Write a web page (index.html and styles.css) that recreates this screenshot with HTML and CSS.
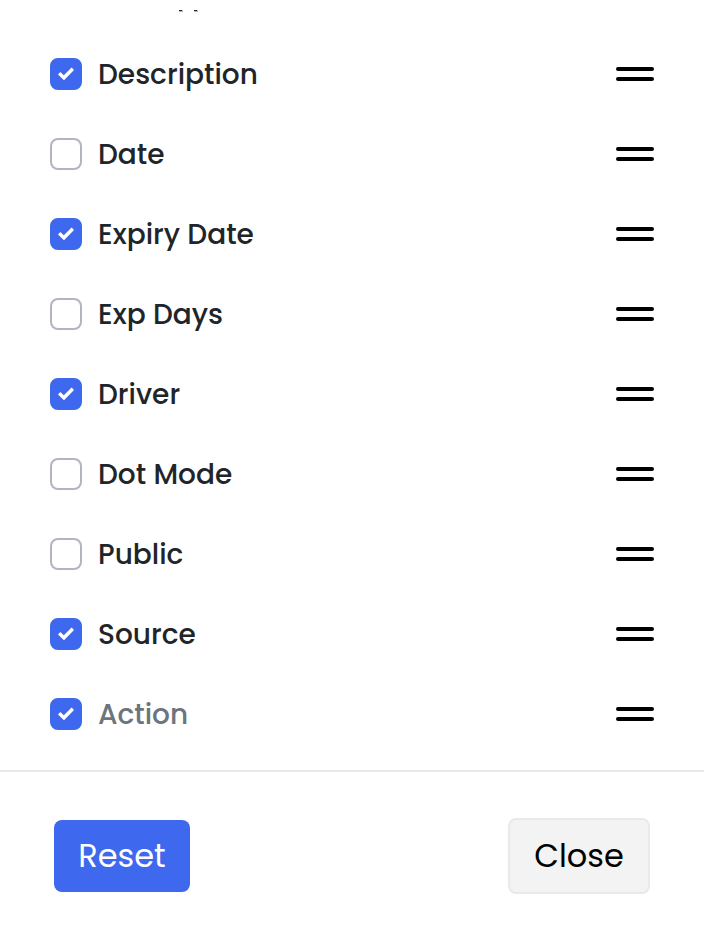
FILE: index.html
```html
<!DOCTYPE html>
<html lang="en">

<head>
  <meta charset="UTF-8">
  <meta name="viewport" content="width=device-width, initial-scale=1.0">
  <title>Columns</title>
  <link rel="stylesheet" href="styles.css">
</head>

<body>
  <div class="scroll-edge">
    <svg width="22" height="2" viewBox="0 0 22 2" aria-hidden="true">
      <path d="M1 0h3v1h-3zM16 0h3v1h-3z" fill="#212529" />
      <path d="M4 0h1v1h-1zM19 0h1v1h-1zM1 1h4v1h-4zM16 1h4v1h-4z" fill="#b5b6b8" />
    </svg>
  </div>

  <ul class="column-list">
    <li class="column-row">
      <input type="checkbox" id="col-description" checked>
      <label for="col-description">Description</label>
      <button type="button" class="drag-handle" aria-label="Move Description"></button>
    </li>
    <li class="column-row">
      <input type="checkbox" id="col-date">
      <label for="col-date">Date</label>
      <button type="button" class="drag-handle" aria-label="Move Date"></button>
    </li>
    <li class="column-row">
      <input type="checkbox" id="col-expiry-date" checked>
      <label for="col-expiry-date">Expiry Date</label>
      <button type="button" class="drag-handle" aria-label="Move Expiry Date"></button>
    </li>
    <li class="column-row">
      <input type="checkbox" id="col-exp-days">
      <label for="col-exp-days">Exp Days</label>
      <button type="button" class="drag-handle" aria-label="Move Exp Days"></button>
    </li>
    <li class="column-row">
      <input type="checkbox" id="col-driver" checked>
      <label for="col-driver">Driver</label>
      <button type="button" class="drag-handle" aria-label="Move Driver"></button>
    </li>
    <li class="column-row">
      <input type="checkbox" id="col-dot-mode">
      <label for="col-dot-mode">Dot Mode</label>
      <button type="button" class="drag-handle" aria-label="Move Dot Mode"></button>
    </li>
    <li class="column-row">
      <input type="checkbox" id="col-public">
      <label for="col-public">Public</label>
      <button type="button" class="drag-handle" aria-label="Move Public"></button>
    </li>
    <li class="column-row">
      <input type="checkbox" id="col-source" checked>
      <label for="col-source">Source</label>
      <button type="button" class="drag-handle" aria-label="Move Source"></button>
    </li>
    <li class="column-row">
      <input type="checkbox" id="col-action" checked disabled>
      <label for="col-action">Action</label>
      <button type="button" class="drag-handle" aria-label="Move Action"></button>
    </li>
  </ul>

  <div class="footer">
    <button type="button" class="btn btn-reset">Reset</button>
    <button type="button" class="btn btn-close">Close</button>
  </div>
</body>

</html>
```

FILE: styles.css
```css
* {
  box-sizing: border-box;
}

body {
  margin: 0;
  font-family: Poppins, Inter, sans-serif;
  color: #212529;
  background-color: #fff;
}

/* bottom edge of the row that is scrolled out of view */
.scroll-edge {
  display: flex;
  height: 34px;
  padding: 10px 0 0 178px;
}

.column-list {
  margin: 0;
  padding: 0 50px 16px;
  list-style: none;
}

.column-row {
  display: flex;
  align-items: center;
  gap: 16px;
  height: 80px;
}

.column-row label {
  flex: 1;
  padding-top: 2px;
  font-size: 28px;
  font-weight: 500;
  line-height: 42px;
}

.column-row input {
  appearance: none;
  width: 32px;
  height: 32px;
  margin: 0;
  border: 2px solid #b0b5c1;
  border-radius: 8px;
  background-color: #fff;
}

.column-row input:checked {
  border-color: #3e68ed;
  background: #3e68ed url("data:image/svg+xml,%3Csvg xmlns='http://www.w3.org/2000/svg' viewBox='0 0 32 32'%3E%3Cpath d='M8 16.4L10.3 14L13.8 17.3L21.6 9.6L24 12L14 22.3Z' fill='white'/%3E%3C/svg%3E") center / 32px 32px no-repeat;
}

.column-row input:disabled + label {
  color: #6c757d;
}

.drag-handle {
  display: flex;
  flex-direction: column;
  gap: 6px;
  width: 38px;
  padding: 0;
  border: none;
  background: none;
  cursor: grab;
}

.drag-handle::before,
.drag-handle::after {
  content: "";
  width: 100%;
  height: 4px;
  border-radius: 2px;
  background-color: #000;
}

.footer {
  display: flex;
  align-items: center;
  justify-content: space-between;
  padding: 46px 54px 34px;
  border-top: 2px solid #e9e9e9;
}

.btn {
  padding: 12px 24px;
  border: none;
  border-radius: 8px;
  font-family: inherit;
  font-size: 32px;
  line-height: 48px;
  cursor: pointer;
}

.btn-reset {
  min-width: 136px;
  color: #fff;
  background-color: #3e68ed;
}

.btn-close {
  min-width: 142px;
  border: 2px solid #e9e9e9;
  color: #000;
  background-color: #f3f3f3;
}
```
